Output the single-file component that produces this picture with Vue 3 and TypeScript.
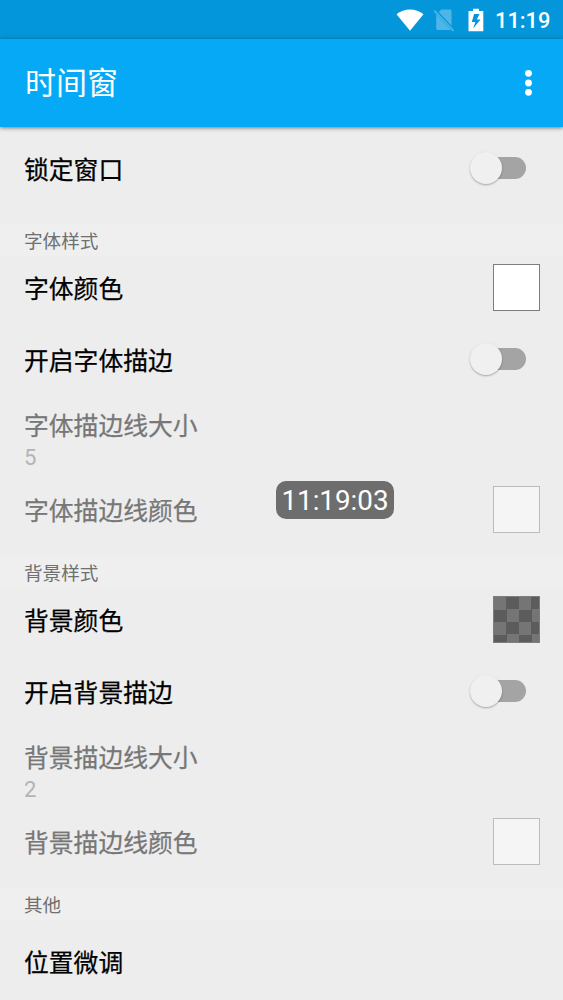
<script setup lang="ts">
type Kind = 'switch' | 'color' | 'value'
interface Item {
  title: string
  kind: Kind | 'plain'
  disabled?: boolean
  value?: string
  swatch?: 'white' | 'checker'
}
interface Section {
  heading: string
  items: Item[]
}

const sections: Section[] = [
  {
    heading: '字体样式',
    items: [
      { title: '字体颜色', kind: 'color', swatch: 'white' },
      { title: '开启字体描边', kind: 'switch' },
      { title: '字体描边线大小', kind: 'value', value: '5', disabled: true },
      { title: '字体描边线颜色', kind: 'color', swatch: 'white', disabled: true },
    ],
  },
  {
    heading: '背景样式',
    items: [
      { title: '背景颜色', kind: 'color', swatch: 'checker' },
      { title: '开启背景描边', kind: 'switch' },
      { title: '背景描边线大小', kind: 'value', value: '2', disabled: true },
      { title: '背景描边线颜色', kind: 'color', swatch: 'white', disabled: true },
    ],
  },
  { heading: '其他', items: [{ title: '位置微调', kind: 'plain' }] },
]
</script>

<template>
  <div class="screen">
    <div class="status">
      <svg class="wifi" width="28" height="22" viewBox="0 0 28 22">
        <path d="M0.5 5.2C8-1.1 20-1.1 27.5 5.2L14 21.8Z" fill="#fff" />
      </svg>
      <svg class="sim" width="22" height="24" viewBox="0 0 22 24">
        <path d="M8.3 1.5H17Q18.5 1.5 18.5 3V17.8L5.7 4.1ZM3.2 6.3L18 22H4.7Q3.2 22 3.2 20.5Z" fill="#4db6e6" />
        <path d="M1.2 2.6L20.6 22.8" stroke="#4db6e6" stroke-width="1.8" />
      </svg>
      <svg class="battery" width="16" height="24" viewBox="0 0 16 24">
        <path d="M5 0.8H11V3H15.3V23.2H0.5V3H5Z" fill="#fff" />
        <path d="M11.5 6H6.1L3.8 14H7.4L5.1 20.4L12.6 11.4H8.8Z" fill="#0396da" />
      </svg>
      <span class="clock">11:19</span>
    </div>
    <header class="toolbar">
      <h1>时间窗</h1>
      <svg class="more" width="8" height="28" viewBox="0 0 8 28">
        <circle cx="4.5" cy="4.3" r="3.4" fill="#fff" />
        <circle cx="4.5" cy="14" r="3.4" fill="#fff" />
        <circle cx="4.5" cy="23.3" r="3.4" fill="#fff" />
      </svg>
    </header>
    <main class="list">
      <div class="row lock">
        <span class="title">锁定窗口</span>
        <div class="switch"><i class="track"></i><i class="thumb"></i></div>
      </div>
      <section v-for="s in sections" :key="s.heading">
        <h2>{{ s.heading }}</h2>
        <div
          v-for="item in s.items"
          :key="item.title"
          class="row"
          :class="[item.kind, { disabled: item.disabled }]"
        >
          <div class="text">
            <span class="title">{{ item.title }}</span>
            <span v-if="item.value" class="value-text">{{ item.value }}</span>
          </div>
          <div v-if="item.kind === 'switch'" class="switch"><i class="track"></i><i class="thumb"></i></div>
          <div v-if="item.kind === 'color'" class="swatch" :class="item.swatch"></div>
        </div>
      </section>
    </main>
    <div class="floating">11:19:03</div>
  </div>
</template>

<style>
body {
  margin: 0;
  background: #ededed;
}
</style>

<style scoped>
.screen {
  position: relative;
  width: 563px;
  height: 1000px;
  overflow: hidden;
  background: #ededed;
  font-family: Roboto, "Noto Sans CJK SC", sans-serif;
}
.status {
  display: flex;
  align-items: center;
  justify-content: flex-end;
  height: 39px;
  padding-right: 13px;
  box-sizing: border-box;
  background: #0396da;
  color: #fff;
}
.wifi {
  margin-right: 9px;
}
.sim {
  margin-right: 13px;
}
.battery {
  margin-right: 11px;
}
.clock {
  font-size: 21.8px;
  font-weight: 500;
  line-height: 39px;
  padding-top: 2px;
  width: 55px;
  white-space: nowrap;
}
.toolbar {
  position: relative;
  display: flex;
  align-items: center;
  justify-content: space-between;
  height: 88px;
  padding: 0 31px 0 25px;
  box-sizing: border-box;
  background: #05a9f6;
  color: #fff;
  box-shadow: 0 1px 4px rgba(0, 0, 0, 0.5);
}
.more {
  overflow: visible;
}
h1 {
  margin: 0;
  padding-top: 2px;
  font-size: 31px;
  font-weight: 400;
  line-height: 44px;
}
.row {
  display: flex;
  align-items: center;
  justify-content: space-between;
  box-sizing: border-box;
  padding: 0 23px 0 24px;
}
.title {
  display: block;
  padding-top: 3px;
  font-size: 24.8px;
  line-height: 36px;
  color: #000;
  white-space: nowrap;
  -webkit-text-stroke: 0.25px currentColor;
}
.lock {
  height: 97px;
  padding-bottom: 13px;
}
h2 {
  margin: 0;
  height: 32px;
  padding: 0 24px;
  font-size: 18.6px;
  font-weight: 400;
  line-height: 36px;
  color: #707070;
  background: #efefef;
}
section {
  padding-bottom: 16px;
}
.color {
  height: 64px;
}
.color.disabled {
  height: 58px;
  padding-bottom: 1px;
}
.switch.row {
  height: 80px;
}
.value {
  height: 82px;
  padding-bottom: 2px;
}
.value .title {
  padding-top: 0;
}
.plain {
  height: 84px;
}
.disabled .title {
  color: #777;
}
.value-text {
  display: block;
  margin-top: -1px;
  font-size: 22px;
  line-height: 28px;
  color: #b3b3b3;
}
div.switch:not(.row) {
  position: relative;
  width: 56px;
  height: 34px;
  margin-right: 13px;
}
.track {
  position: absolute;
  left: 12px;
  top: 5px;
  width: 43px;
  height: 22px;
  border-radius: 11px;
  background: #a4a4a4;
}
.thumb {
  position: absolute;
  left: -1px;
  top: 0;
  width: 32px;
  height: 32px;
  border-radius: 50%;
  background: #f0f0f0;
  box-shadow: 0 1px 2px rgba(0, 0, 0, 0.3);
}
.swatch {
  width: 47px;
  height: 47px;
  margin-bottom: 2px;
  box-sizing: border-box;
  border: 1px solid #7d7d7d;
  background: #fff;
}
.disabled .swatch {
  border-color: #bcbcbc;
  background: #f5f5f5;
}
.swatch.checker {
  background: conic-gradient(#5c5c5c 25%, #757575 0 50%, #5c5c5c 0 75%, #757575 0) 0 0 / 25px 25px;
}
.floating {
  position: absolute;
  left: 276px;
  top: 481px;
  width: 118px;
  height: 38px;
  border-radius: 10px;
  background: #6d6d6d;
  color: #fff;
  font-size: 27.8px;
  line-height: 39px;
  text-align: center;
}
</style>
